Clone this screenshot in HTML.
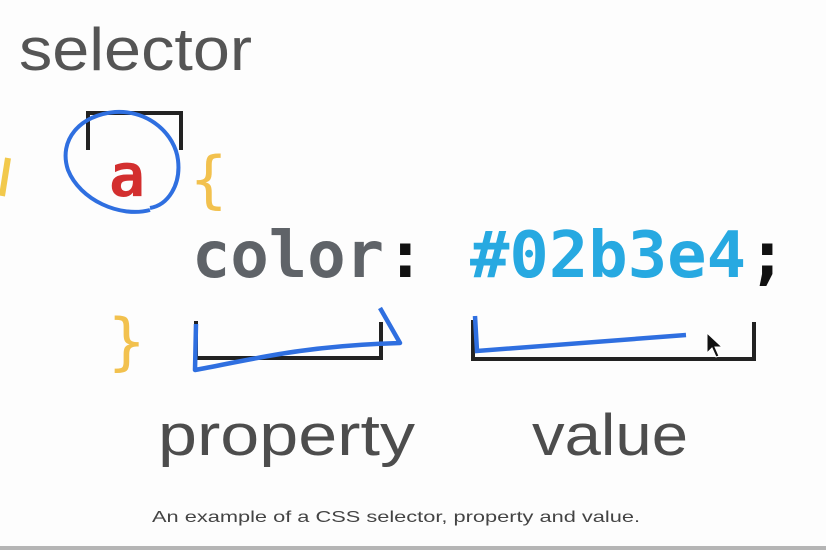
<!DOCTYPE html>
<html><head><meta charset="utf-8"><style>
html,body{margin:0;padding:0;background:#fff;width:826px;height:550px;overflow:hidden}
</style></head><body>
<svg width="826" height="550" viewBox="0 0 826 550" xmlns="http://www.w3.org/2000/svg">
<rect width="826" height="550" fill="#fdfdfd"/>
<text x="19" y="70" font-family="Liberation Sans, sans-serif" font-size="60" fill="#555" textLength="233" lengthAdjust="spacingAndGlyphs">selector</text>
<path d="M88 150 V113 H181 V150" fill="none" stroke="#222" stroke-width="4"/>
<path d="M8 158 L2 196" stroke="#f2c94c" stroke-width="6" fill="none"/>
<text x="109" y="196" font-family="DejaVu Sans Mono, monospace" font-weight="bold" font-size="60" fill="#d32f2f">a</text>
<text x="190" y="201" font-family="DejaVu Sans Mono, monospace" font-size="62" fill="#f2c14e">{</text>
<text x="192" y="277" font-family="DejaVu Sans Mono, monospace" font-weight="bold" font-size="64" fill="#5f6368" textLength="192" lengthAdjust="spacingAndGlyphs">color</text>
<text x="386" y="277" font-family="DejaVu Sans Mono, monospace" font-weight="bold" font-size="64" fill="#111">:</text>
<text x="470" y="277" font-family="DejaVu Sans Mono, monospace" font-weight="bold" font-size="64" fill="#27a9e1" textLength="276" lengthAdjust="spacingAndGlyphs">#02b3e4</text>
<text x="748" y="277" font-family="DejaVu Sans Mono, monospace" font-weight="bold" font-size="64" fill="#111">;</text>
<text x="108" y="363" font-family="DejaVu Sans Mono, monospace" font-size="62" fill="#f2c14e">}</text>
<path d="M196 321 V358 H381 V322" fill="none" stroke="#222" stroke-width="4"/>
<path d="M473 320 V359 H754 V322" fill="none" stroke="#222" stroke-width="4"/>
<path d="M150 210 C120 218 80 200 68 170 C58 140 80 115 115 112 C150 110 175 135 178 160 C181 185 168 205 150 208" fill="none" stroke="#2f6fe0" stroke-width="4"/>
<path d="M196 324 L195 370 C250 360 300 346 400 343 L380 308" fill="none" stroke="#2f6fe0" stroke-width="4.5" stroke-linejoin="round"/>
<path d="M475 316 L477 351 C550 345 620 340 686 335" fill="none" stroke="#2f6fe0" stroke-width="4.5"/>
<path d="M707 333 L707 353 L712 348 L716 357 L719 356 L715 347 L722 347 Z" fill="#111" stroke="#fff" stroke-width="1"/>
<text x="158" y="455" font-family="Liberation Sans, sans-serif" font-size="58" fill="#4d4d4d" textLength="257" lengthAdjust="spacingAndGlyphs">property</text>
<text x="532" y="455" font-family="Liberation Sans, sans-serif" font-size="58" fill="#4d4d4d" textLength="156" lengthAdjust="spacingAndGlyphs">value</text>
<text x="152" y="522" font-family="Liberation Sans, sans-serif" font-size="16" fill="#444" textLength="488" lengthAdjust="spacingAndGlyphs">An example of a CSS selector, property and value.</text>
<rect x="0" y="546" width="826" height="4" fill="#b5b5b5"/>
</svg>
</body></html>
